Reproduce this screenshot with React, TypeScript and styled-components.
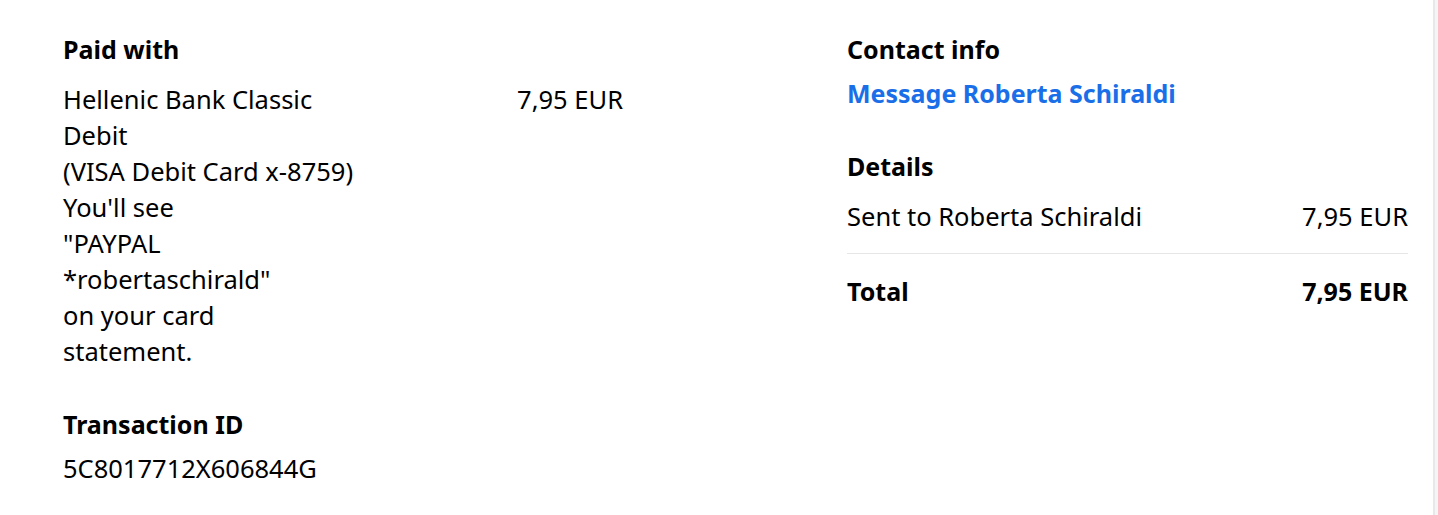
import React from "react";
import styled, { createGlobalStyle } from "styled-components";

const GlobalStyle = createGlobalStyle`
  html, body {
    margin: 0;
    padding: 0;
    background: #f5f5f5;
  }
  body {
    font-family: "Noto Sans", Lato, sans-serif;
    color: #000000;
  }
`;

export default function App() {
    return <>
        <GlobalStyle/>
        <Page>
            <LeftColumn>
                <Section>
                    <Heading>Paid with</Heading>
                    <PaymentRow>
                        <Body>
                            Hellenic Bank Classic<br/>
                            Debit<br/>
                            (VISA Debit Card x-8759)<br/>
                            You'll see<br/>
                            "PAYPAL<br/>
                            *robertaschirald"<br/>
                            on your card<br/>
                            statement.
                        </Body>
                        <Body>7,95 EUR</Body>
                    </PaymentRow>
                </Section>
                <Section $gap={8}>
                    <Heading>Transaction ID</Heading>
                    <Body>5C8017712X606844G</Body>
                </Section>
            </LeftColumn>
            <RightColumn>
                <Section $gap={8}>
                    <Heading>Contact info</Heading>
                    <ContactLink href="#">Message Roberta Schiraldi</ContactLink>
                </Section>
                <Section>
                    <Heading>Details</Heading>
                    <LineItem>
                        <Body>Sent to Roberta Schiraldi</Body>
                        <Body>7,95 EUR</Body>
                    </LineItem>
                    <TotalRow>
                        <Heading>Total</Heading>
                        <Heading>7,95 EUR</Heading>
                    </TotalRow>
                </Section>
            </RightColumn>
        </Page>
    </>;
}

const Page = styled.div`
  width: 1435px;
  min-height: 515px;
  box-sizing: border-box;
  background: #ffffff;
  border-right: 2px solid #e8e8e8;
  display: grid;
  grid-template-columns: 784px 561px;
  padding: 31px 0 0 63px;
`;
const LeftColumn = styled.div`
  display: flex;
  flex-direction: column;
  gap: 37px;
`;
const RightColumn = styled.div`
  display: flex;
  flex-direction: column;
  gap: 37px;
`;
const Section = styled.div<{ $gap?: number }>`
  display: flex;
  flex-direction: column;
  gap: ${p => p.$gap ?? 14}px;
`;
const Heading = styled.div`
  font-size: 25px;
  line-height: 36px;
  font-weight: 700;
`;
const Body = styled.div`
  font-size: 25.5px;
  line-height: 36px;
  font-weight: 400;
`;
const PaymentRow = styled.div`
  display: flex;
  justify-content: space-between;
  width: 560px;
`;
const ContactLink = styled.a`
  font-size: 25px;
  line-height: 36px;
  font-weight: 700;
  color: #1a6fe8;
  text-decoration: none;
`;
const LineItem = styled.div`
  display: flex;
  justify-content: space-between;
  padding-bottom: 19px;
  border-bottom: 1px solid #e6e6e6;
`;
const TotalRow = styled.div`
  display: flex;
  justify-content: space-between;
  padding-top: 5px;
`;
